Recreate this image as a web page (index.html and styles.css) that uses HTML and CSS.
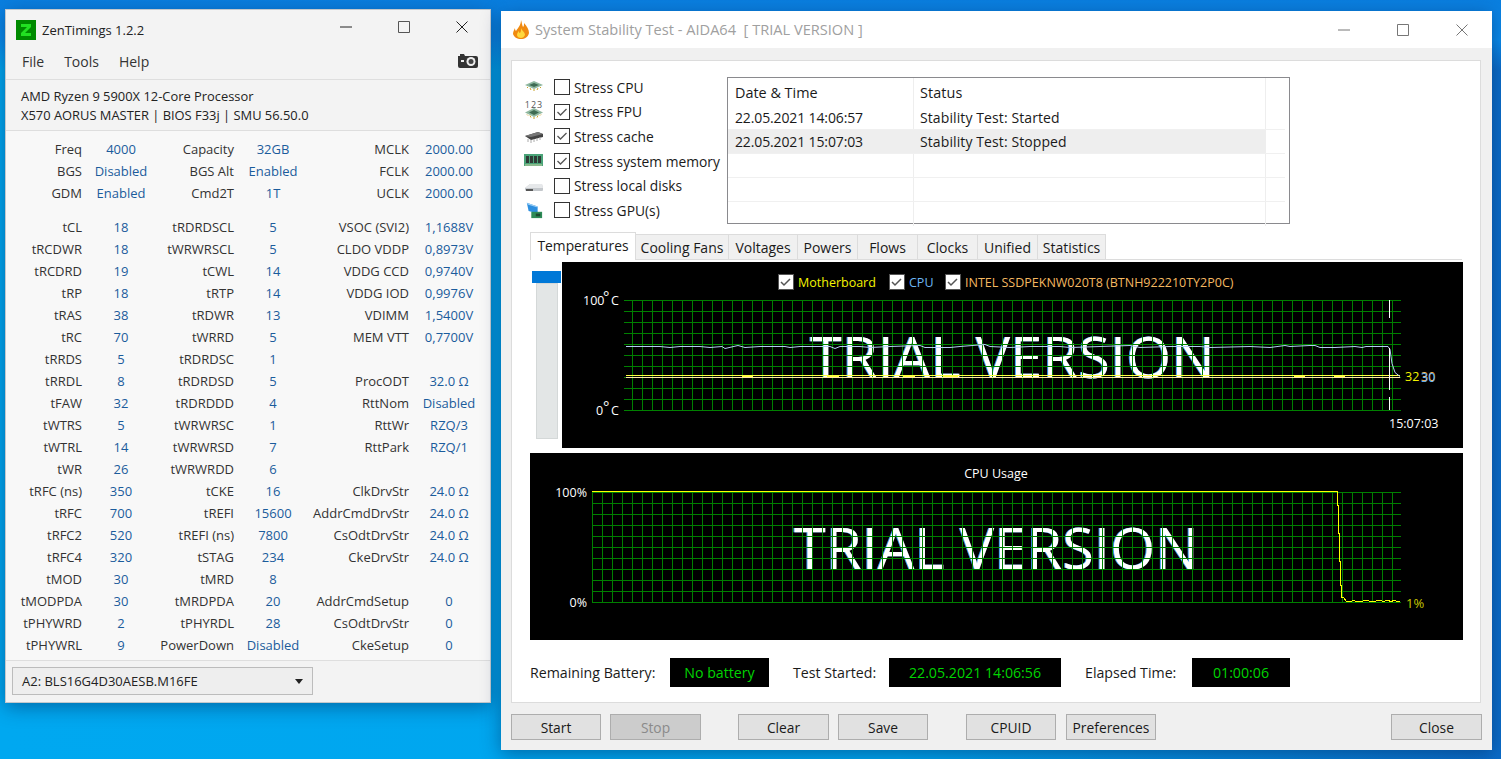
FILE: index.html
```html
<!DOCTYPE html>
<html lang="en">
<head>
<meta charset="utf-8">
<title>ZenTimings and AIDA64</title>
<link rel="stylesheet" href="styles.css">
</head>
<body>
<section class="win zen">
  <header class="zen-title">
    <svg class="zen-logo" viewBox="0 0 20 20"><rect width="20" height="20" fill="#008a00"/><path d="M5 4h10v3l-6 6h6v3H5v-3l6-6H5z" fill="#22e022"/></svg>
    <span class="zen-name">ZenTimings 1.2.2</span>
    <div class="ctl-group zen-ctl">
      <svg viewBox="0 0 12 12"><path d="M0 6h12" stroke="#222" fill="none"/></svg>
      <svg viewBox="0 0 12 12"><path d="M.5.5h11v11H.5z" stroke="#555" fill="none"/></svg>
      <svg viewBox="0 0 12 12"><path d="M.5.5l11 11M11.5.5l-11 11" stroke="#222" fill="none"/></svg>
    </div>
  </header>
  <nav class="zen-menu">
    <span>File</span><span>Tools</span><span>Help</span>
    <svg class="camera" viewBox="0 0 20 15"><path d="M0 3h2V1h4l1 2h11q2 0 2 2v8q0 2-2 2H2q-2 0-2-2z" fill="#333"/><circle cx="13" cy="8.500" r="4.500" fill="#eee"/><circle cx="13" cy="8.500" r="2.500" fill="#444"/><rect x="3" y="7" width="3" height="2" fill="#eee"/></svg>
  </nav>
  <div class="zen-info">
    <div>AMD Ryzen 9 5900X 12-Core Processor</div>
    <div>X570 AORUS MASTER | BIOS F33j | SMU 56.50.0</div>
  </div>
  <div class="zen-body">
    <div class="tgrid">
      <b>Freq</b><i>4000</i><b>Capacity</b><i>32GB</i><b>MCLK</b><i>2000.00</i>
      <b>BGS</b><i>Disabled</i><b>BGS Alt</b><i>Enabled</i><b>FCLK</b><i>2000.00</i>
      <b>GDM</b><i>Enabled</i><b>Cmd2T</b><i>1T</i><b>UCLK</b><i>2000.00</i>
    </div>
    <div class="tgrid tgrid-main">
      <b>tCL</b><i>18</i><b>tRDRDSCL</b><i>5</i><b>VSOC (SVI2)</b><i>1,1688V</i>
      <b>tRCDWR</b><i>18</i><b>tWRWRSCL</b><i>5</i><b>CLDO VDDP</b><i>0,8973V</i>
      <b>tRCDRD</b><i>19</i><b>tCWL</b><i>14</i><b>VDDG CCD</b><i>0,9740V</i>
      <b>tRP</b><i>18</i><b>tRTP</b><i>14</i><b>VDDG IOD</b><i>0,9976V</i>
      <b>tRAS</b><i>38</i><b>tRDWR</b><i>13</i><b>VDIMM</b><i>1,5400V</i>
      <b>tRC</b><i>70</i><b>tWRRD</b><i>5</i><b>MEM VTT</b><i>0,7700V</i>
      <b>tRRDS</b><i>5</i><b>tRDRDSC</b><i>1</i><b></b><i></i>
      <b>tRRDL</b><i>8</i><b>tRDRDSD</b><i>5</i><b>ProcODT</b><i>32.0 Ω</i>
      <b>tFAW</b><i>32</i><b>tRDRDDD</b><i>4</i><b>RttNom</b><i>Disabled</i>
      <b>tWTRS</b><i>5</i><b>tWRWRSC</b><i>1</i><b>RttWr</b><i>RZQ/3</i>
      <b>tWTRL</b><i>14</i><b>tWRWRSD</b><i>7</i><b>RttPark</b><i>RZQ/1</i>
      <b>tWR</b><i>26</i><b>tWRWRDD</b><i>6</i><b></b><i></i>
      <b>tRFC (ns)</b><i>350</i><b>tCKE</b><i>16</i><b>ClkDrvStr</b><i>24.0 Ω</i>
      <b>tRFC</b><i>700</i><b>tREFI</b><i>15600</i><b>AddrCmdDrvStr</b><i>24.0 Ω</i>
      <b>tRFC2</b><i>520</i><b>tREFI (ns)</b><i>7800</i><b>CsOdtDrvStr</b><i>24.0 Ω</i>
      <b>tRFC4</b><i>320</i><b>tSTAG</b><i>234</i><b>CkeDrvStr</b><i>24.0 Ω</i>
      <b>tMOD</b><i>30</i><b>tMRD</b><i>8</i><b></b><i></i>
      <b>tMODPDA</b><i>30</i><b>tMRDPDA</b><i>20</i><b>AddrCmdSetup</b><i>0</i>
      <b>tPHYWRD</b><i>2</i><b>tPHYRDL</b><i>28</i><b>CsOdtDrvStr</b><i>0</i>
      <b>tPHYWRL</b><i>9</i><b>PowerDown</b><i>Disabled</i><b>CkeSetup</b><i>0</i>
    </div>
  </div>
  <footer class="zen-foot">
    <div class="combo"><span>A2: BLS16G4D30AESB.M16FE</span><span class="caret"></span></div>
  </footer>
</section>

<section class="win aida">
  <header class="aida-title">
    <svg class="flame" viewBox="0 0 16 19"><path d="M8 0c1 3 1 5 2 7 1-1 1-2 1-4 3 3 5 7 5 10-1 4-4 6-8 6s-7-2-8-5c0-2 1-4 2-6 0 1 0 2 1 3 2-3 5-6 5-11z" fill="#f08a10"/><path d="M8 8c1 3 4 4 4 7-1 2-2 3-4 3s-4-1-4-3c0-2 1-3 2-4 0 1 0 2 1 2 1-1 1-3 1-5z" fill="#ffd83c"/></svg>
    <span class="aida-name">System Stability Test - AIDA64&nbsp; [ TRIAL VERSION ]</span>
    <div class="ctl-group aida-ctl">
      <svg viewBox="0 0 12 12"><path d="M0 6h12" stroke="#777" fill="none"/></svg>
      <svg viewBox="0 0 12 12"><path d="M.5.5h11v11H.5z" stroke="#777" fill="none"/></svg>
      <svg viewBox="0 0 12 12"><path d="M.5.5l11 11M11.5.5l-11 11" stroke="#777" fill="none"/></svg>
    </div>
  </header>
  <div class="panel">
    <div class="top-row">
      <ul class="stress">
        <li><svg class="dev" viewBox="0 0 20 18"><path d="M1 7l9-4 9 4-9 4z" fill="#8fb8a0"/><path d="M5 7l5-2 5 2-5 2z" fill="#3e6b52"/><path d="M3 9l1 1M6 10l1 2M10 11v2M14 10l-1 2M17 9l-1 1" stroke="#c9a227"/></svg><span class="check"></span>Stress CPU</li>
        <li><svg class="dev dev-fpu" viewBox="0 -2 20 28"><text x="10" y="7.700" class="dev-num">123</text><path d="M1 12.500l9-4.500 9 4.500-9 4.500z" fill="#8fb8a0"/><path d="M5 12.500l5-2.500 5 2.500-5 2.500z" fill="#3e6b52"/><path d="M3 14.500l1 1M6 15.500l1 2M10 17v2M14 15.500l-1 2M17 14.500l-1 1" stroke="#c9a227"/></svg><span class="check on"><svg viewBox="0 0 14 14"><path d="M2.500 7l3 3 6-6" fill="none" stroke="#555" stroke-width="1.300"/></svg></span>Stress FPU</li>
        <li><svg class="dev" viewBox="0 0 20 18"><path d="M1 9l13-4 5 2v3L7 13z" fill="#444"/><path d="M1 9l13-4 5 2-12 3z" fill="#777"/><path d="M4 12v3M7 13v3M10 12v3M13 11v3M16 10v3" stroke="#aaa"/></svg><span class="check on"><svg viewBox="0 0 14 14"><path d="M2.500 7l3 3 6-6" fill="none" stroke="#555" stroke-width="1.300"/></svg></span>Stress cache</li>
        <li><svg class="dev" viewBox="0 0 20 18"><rect y="2" width="19" height="12" fill="#4aa378"/><path d="M2 4h3v7H2zM6 4h3v7H6zM10 4h3v7h-3zM14 4h3v7h-3z" fill="#2f3b36"/><path d="M1 13h17" stroke="#c8d0a0"/></svg><span class="check on"><svg viewBox="0 0 14 14"><path d="M2.500 7l3 3 6-6" fill="none" stroke="#555" stroke-width="1.300"/></svg></span>Stress system memory</li>
        <li><svg class="dev" viewBox="0 0 20 18"><path d="M1 11l5-4h12l1 4v2q0 1-1 1H2l-1-1z" fill="#c4c8cc"/><path d="M1 11l5-4h12l1 4z" fill="#e6e8ea"/><rect x="2" y="12" width="7" height="2" fill="#555"/></svg><span class="check"></span>Stress local disks</li>
        <li><svg class="dev" viewBox="0 0 20 20"><path d="M2 2l12 4v8L4 11z" fill="#2d8fe0"/><path d="M2 2l12 4-1 1L3 4z" fill="#9ed0f5"/><rect x="7" y="12" width="12" height="7" fill="#2e8b57"/><rect x="12" y="14" width="5" height="3" fill="#1c4a30"/></svg><span class="check"></span>Stress GPU(s)</li>
      </ul>
      <div class="log">
        <div class="log-row log-head"><span>Date &amp; Time</span><span>Status</span><span></span></div>
        <div class="log-row"><span class="stamp">22.05.2021 14:06:57</span><span>Stability Test: Started</span><span></span></div>
        <div class="log-row log-sel"><span class="stamp">22.05.2021 15:07:03</span><span>Stability Test: Stopped</span><span></span></div>
        <div class="log-row"><span></span><span></span><span></span></div>
        <div class="log-row"><span></span><span></span><span></span></div>
        <div class="log-row log-last"><span></span><span></span><span></span></div>
      </div>
    </div>
    <div class="tabs">
      <span class="tab tab-on w1">Temperatures</span><span class="tab w2">Cooling Fans</span><span class="tab w3">Voltages</span><span class="tab w4">Powers</span><span class="tab w5">Flows</span><span class="tab w5">Clocks</span><span class="tab w5">Unified</span><span class="tab w6">Statistics</span>
    </div>
    <div class="chart-row">
      <div class="scroll"><div class="thumb"></div></div>
      <svg class="chart chart-temp" viewBox="562 262 901 186">
        <defs>
          <pattern id="v1" x="632" y="0" width="10" height="10" patternUnits="userSpaceOnUse"><rect width="1" height="10" fill="#008000"/></pattern>
          <pattern id="h1" x="0" y="300" width="10" height="11" patternUnits="userSpaceOnUse"><rect width="10" height="1" fill="#008000"/></pattern>
          <pattern id="v2" x="592" y="0" width="10" height="10" patternUnits="userSpaceOnUse"><rect width="1" height="10" fill="#008000"/></pattern>
          <pattern id="h2" x="0" y="492" width="10" height="11" patternUnits="userSpaceOnUse"><rect width="10" height="1" fill="#008000"/></pattern>
        </defs>
        <g class="legend-box"><rect x="778.500" y="274.500" width="15" height="15"/><path d="M781 282l3 3 6-6"/></g>
        <text x="798" y="286.500" class="t12 yl">Motherboard</text>
        <g class="legend-box"><rect x="889.500" y="274.500" width="15" height="15"/><path d="M892 282l3 3 6-6"/></g>
        <text x="909" y="286.500" class="t12 bl">CPU</text>
        <g class="legend-box"><rect x="945.500" y="274.500" width="15" height="15"/><path d="M948 282l3 3 6-6"/></g>
        <text x="965" y="286.500" class="t12 or">INTEL SSDPEKNW020T8 (BTNH922210TY2P0C)</text>
        <text x="583" y="305" class="t12 wh">100</text><text x="603" y="302" class="deg wh">°</text><text x="611" y="305" class="t12 wh">C</text>
        <text x="596" y="415" class="t12 wh">0</text><text x="603" y="412" class="deg wh">°</text><text x="611" y="415" class="t12 wh">C</text>
        <text x="810" y="378" class="trial" textLength="405" lengthAdjust="spacingAndGlyphs">TRIAL VERSION</text>
        <rect x="632" y="300" width="761" height="111" fill="url(#v1)"/>
        <rect x="624" y="300" width="777" height="111" fill="url(#h1)"/>
        <path class="ln-pale" d="M626 377.500H1400"/>
        <path class="ln-yl" d="M626 375.500H1400M742 376.500h11M827 376.500h12M903 376.500h12M943 376.500h15M1294 376.500h11M1334 376.500h11"/>
        <polyline class="ln-bl" points="626,346.500 660,346.500 670,347.500 680,346.500 700,346.500 710,347.500 722,346.500 725,348.500 738,345.500 745,347.500 760,346.500 785,346.500 790,347.500 800,346.500 830,346.500 835,348.500 840,346.500 860,346.500 870,347.500 890,346.500 920,345.500 925,347.500 950,347.500 960,346.500 985,344.500 990,346.500 1010,347.500 1030,346.500 1060,346.500 1070,347.500 1100,346.500 1130,345.500 1140,347.500 1170,346.500 1200,346.500 1210,347.500 1250,346.500 1270,347.500 1285,345.500 1290,346.500 1310,345.500 1315,345.500 1320,347.500 1335,347.500 1355,346.500 1362,347.500 1366,346.500 1388,346.500 1390,349.500 1392,363.500 1395,372.500 1400,376.500"/>
        <path class="ln-wh" d="M1389.500 300v18M1389.500 348v42M1389.500 397v13"/>
        <text x="1405" y="381" class="t12 yl">32</text><text x="1421" y="381" class="t12 or">30</text><text x="1421" y="382" class="t12 bl">30</text>
        <text x="1389" y="428" class="t12 wh">15:07:03</text>
      </svg>
    </div>
    <svg class="chart chart-cpu" viewBox="530 453 933 187">
      <text x="996" y="478" class="t12 wh mid">CPU Usage</text>
      <text x="587" y="497" class="t12 wh end">100%</text>
      <text x="587" y="607" class="t12 wh end">0%</text>
      <text x="794" y="569" class="trial" textLength="405" lengthAdjust="spacingAndGlyphs">TRIAL VERSION</text>
      <rect x="592" y="492" width="801" height="111" fill="url(#v2)"/>
      <rect x="592" y="492" width="809" height="111" fill="url(#h2)"/>
      <polyline class="ln-cy" points="592,491.500 1337.500,491.500 1337.500,505 1338.500,505 1338.500,533 1339.500,533 1339.500,561 1340.500,561 1340.500,585 1341.500,585 1341.500,597 1344,598 1346,601 1348,602 1352,601 1354,600 1356,602 1359,601 1363,601 1366,600 1369,601 1372,602 1376,601 1379,600 1382,601 1385,601 1388,600 1391,602 1394,600 1396,601 1398,602 1400,601"/>
      <text x="1406" y="608" class="t12 yl2">1%</text>
    </svg>
    <div class="status">
      <span class="st-label w-a">Remaining Battery:</span><span class="st-box b-a">No battery</span>
      <span class="st-label w-b">Test Started:</span><span class="st-box b-b">22.05.2021 14:06:56</span>
      <span class="st-label w-c">Elapsed Time:</span><span class="st-box b-c">01:00:06</span>
    </div>
  </div>
  <div class="buttons">
    <button class="btn">Start</button><button class="btn btn-off wide">Stop</button>
    <button class="btn gap wide">Clear</button><button class="btn">Save</button>
    <button class="btn gap2">CPUID</button><button class="btn">Preferences</button>
    <button class="btn close">Close</button>
  </div>
</section>
</body>
</html>
```
FILE: styles.css
```css
* { box-sizing: border-box; }
html, body { margin: 0; height: 100%; overflow: hidden; }
body {
  font-family: "Open Sans", "Noto Sans", sans-serif;
  font-size: 13.8px;
  color: #1a1a1a;
  background:
    linear-gradient(180deg, #0a7fe0 0, #0a8cec 40px, rgba(0,160,240,0) 70px),
    linear-gradient(90deg, #00a8f0 0, #00a5ee 60%, #0b6cc8 100%);
}
.win { position: absolute; box-shadow: 0 4px 18px rgba(0,30,80,.45); }

/* ZenTimings */
.zen {
  left: 5px; top: 9px; width: 486px; height: 694px;
  background: #f3f3f3; border: 1px solid #c4c8cc;
  display: flex; flex-direction: column;
}
.zen-title { height: 36px; display: flex; align-items: center; padding: 3px 0 0 10px; flex: none; }
.zen-logo { width: 20px; height: 20px; margin-right: 6px; }
.zen-name { font-size: 13px; color: #222; }
.ctl-group { margin-left: auto; display: flex; }
.ctl-group svg { width: 12px; height: 12px; }
.zen-ctl { gap: 46px; padding-right: 22px; margin-top: -6px; }
.zen-menu { height: 34px; flex: none; display: flex; align-items: center; gap: 20px; padding: 0 12px 2px 16px; border-bottom: 1px solid #dedede; font-size: 14px; color: #333; }
.camera { width: 20px; height: 15px; margin-left: auto; margin-top: -3px; }
.zen-info { height: 51px; flex: none; padding: 7px 0 0 15px; line-height: 19px; font-size: 12.900px; color: #222; border-bottom: 1px solid #dedede; }
.zen-body { background: #f8f8f8; flex: 1; padding-top: 7px; border-bottom: 1px solid #dedede; }
.tgrid { display: grid; grid-template-columns: 76px 78px 74px 78px 97px 80px; grid-auto-rows: 22px; line-height: 22px; font-size: 13px; }
.tgrid-main { margin-top: 12px; }
.tgrid b { font-weight: 400; text-align: right; color: #333; white-space: nowrap; }
.tgrid i { font-style: normal; text-align: center; color: #1b5c9c; white-space: nowrap; }
.zen-foot { height: 41px; flex: none; padding: 6px 0 0 6px; }
.combo { width: 301px; height: 28px; border: 1px solid #bcbcbc; background: #eee; display: flex; align-items: center; justify-content: space-between; padding: 0 9px 0 9px; font-size: 13px; color: #222; }
.caret { width: 0; height: 0; border: 4px solid transparent; border-top: 5px solid #222; border-bottom: 0; }

/* AIDA */
.aida {
  left: 501px; top: 11px; width: 991px; height: 739px; background: #f0f0f0;
  display: flex; flex-direction: column; padding: 0 10px 0 10px;
}
.aida-title { height: 37px; margin: 0 -10px; background: #fff; display: flex; align-items: center; padding: 0 24px 0 12px; flex: none; }
.flame { width: 16px; height: 19px; margin-right: 6px; }
.aida-name { font-size: 14.600px; color: #a0a0a0; margin-top: -2px; }
.aida-ctl { gap: 47px; padding-right: 0; }
.aida-ctl svg { width: 12px; height: 12px; }
.panel { margin-top: 12px; height: 643px; width: 970px; background: #fff; border: 1px solid #dcdcdc; padding: 16px 0 0 18px; flex: none; }
.top-row { display: flex; height: 147px; }
.stress { list-style: none; margin: -2px 0 0; padding: 0; width: 197px; display: flex; flex-direction: column; }
.stress li { height: 24.600px; display: flex; align-items: center; white-space: nowrap; color: #1a1a1a; }
.dev { width: 20px; height: 18px; margin: 0 10px 0 -6px; flex: none; }
.dev-fpu { height: 28px; margin-top: -2px; margin-bottom: -2px; }
.dev-num { font-size: 9px; letter-spacing: 1px; text-anchor: middle; fill: #555; font-family: "Open Sans", sans-serif; }
.check { width: 16px; height: 16px; border: 1px solid #333; margin-right: 4px; flex: none; display: block; }
.check svg { display: block; width: 14px; height: 14px; }
.log { width: 563px; height: 147px; border: 1px solid #8a8a8e; padding-right: 4px; font-size: 14px; }
.log-row { display: grid; grid-template-columns: 186px 352px 1fr; height: 24px; align-items: center; line-height: 23px; border-bottom: 1px solid #f0f0f0; }
.log-row span { height: 100%; padding-left: 7px; border-right: 1px solid #eee; white-space: nowrap; }
.log-row span:nth-child(2) { padding-left: 6px; letter-spacing: .1px; }
.log-row .stamp { letter-spacing: -.13px; }
.log-row span:last-child { border-right: 0; }
.log-head { height: 28px; border-bottom: 0; font-size: 14.400px; line-height: 29px; }
.log-sel { background: linear-gradient(90deg, #eee 537px, transparent 537px); }
.log-last { border-bottom: 0; }
.tabs { display: flex; align-items: flex-end; height: 27px; margin: 9px 18px 0 0; border-bottom: 1px solid #dcdcdc; font-size: 14px; }
.tab { height: 25px; background: #f0f0f0; border: 1px solid #dcdcdc; border-left: 0; border-bottom: 0; text-align: center; line-height: 25px; color: #1a1a1a; white-space: nowrap; }
.tab-on { height: 28px; margin-bottom: -1px; background: #fff; border-left: 1px solid #dcdcdc; line-height: 25px; position: relative; font-size: 13.800px; }
.w1 { width: 106px; } .w2 { width: 93px; } .w3 { width: 69px; } .w4 { width: 60px; } .w5 { width: 60px; } .w6 { width: 68px; }
.chart-row { display: flex; margin-top: 2px; height: 186px; align-items: flex-start; }
.scroll { position: relative; width: 22px; height: 156px; margin: 21px 4px 0 6px; background: #e3e6e6; border: 1px solid #d4d8d8; flex: none; }
.thumb { position: absolute; left: -5px; top: -13px; width: 29px; height: 12px; background: #0078d7; }
.chart { display: block; background: #000; flex: none; }
.chart-temp { width: 901px; height: 186px; }
.chart-cpu { width: 933px; height: 187px; margin-top: 5px; }
.t12 { font-family: "Open Sans", sans-serif; font-size: 12.500px; }
.deg { font-family: "Open Sans", sans-serif; font-size: 15px; }
.wh { fill: #fff; } .yl { fill: #f4f400; } .yl2 { fill: #c8c800; font-size: 13px; } .bl { fill: #6cb6f5; } .or { fill: #f4b860; }
.mid { text-anchor: middle; } .end { text-anchor: end; }
.legend-box rect { fill: #fff; stroke: #555; }
.legend-box path { fill: none; stroke: #555; stroke-width: 1.500; }
.trial { font-family: "Open Sans", sans-serif; font-size: 57px; font-weight: 400; fill: #fff; filter: drop-shadow(-1px 0 0 #3a9cf0); }
.ln-yl { fill: none; stroke: #ffff40; stroke-width: 1; }
.ln-pale { fill: none; stroke: #ffe8a8; stroke-width: 1; }
.ln-bl { fill: none; stroke: #b4ccf4; stroke-width: 1; }
.ln-wh { fill: none; stroke: #fff; stroke-width: 1; }
.ln-cy { fill: none; stroke: #ffff00; stroke-width: 1; shape-rendering: crispEdges; }
.status { display: flex; align-items: center; height: 29px; margin-top: 18px; font-size: 14.200px; }
.st-label { white-space: nowrap; }
.st-box { height: 29px; background: #000; color: #00d400; display: flex; align-items: center; justify-content: center; white-space: nowrap; }
.w-a { width: 140px; } .b-a { width: 99px; } .w-b { width: 96px; margin-left: 24px; } .b-b { width: 172px; } .w-c { width: 107px; margin-left: 24px; } .b-c { width: 98px; }
.buttons { display: flex; margin-top: 11px; height: 26px; }
.btn { width: 90px; height: 26px; font: inherit; color: #1a1a1a; background: #e1e1e1; border: 1px solid #adadad; padding: 0; margin-right: 9px; }
.wide { width: 91px; }
.btn-off { background: #cccccc; color: #8a8a8a; }
.gap { margin-left: 28px; }
.gap2 { margin-left: 29px; margin-right: 10px; }
.close { margin-left: auto; margin-right: 0; width: 91px; }
```
